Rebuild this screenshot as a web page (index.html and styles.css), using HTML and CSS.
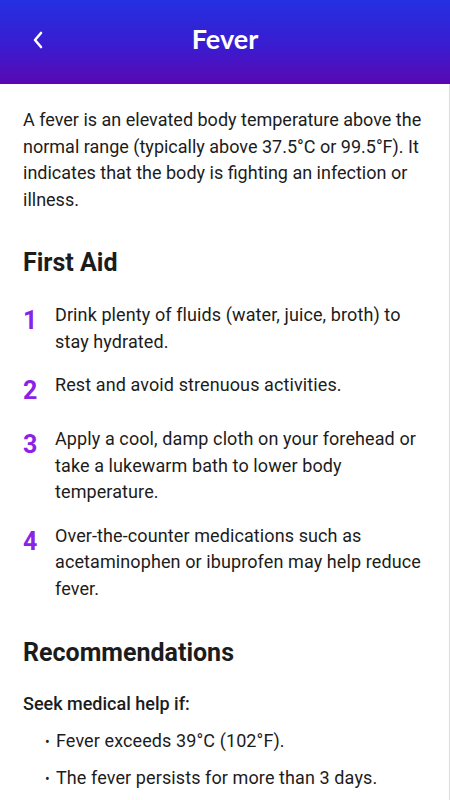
FILE: index.html
```html
<!DOCTYPE html>
<html lang="en">
<head>
  <meta charset="UTF-8">
  <title>Fever</title>
  <link rel="stylesheet" href="styles.css">
</head>
<body>
  <header class="topbar">
    <button class="back" aria-label="Back">
      <svg width="14" height="18" viewBox="0 0 14 18"><path d="M10 2 L4 9 L10 16" fill="none" stroke="#fff" stroke-width="2.6" stroke-linecap="round" stroke-linejoin="round"/></svg>
    </button>
    <h1>Fever</h1>
  </header>

  <main class="content">
    <p class="intro">A fever is an elevated body temperature above the normal range (typically above 37.5°C or 99.5°F). It indicates that the body is fighting an infection or illness.</p>

    <h2>First Aid</h2>
    <ol class="steps">
      <li><span class="num">1</span><span class="txt">Drink plenty of fluids (water, juice, broth) to stay hydrated.</span></li>
      <li><span class="num">2</span><span class="txt">Rest and avoid strenuous activities.</span></li>
      <li><span class="num">3</span><span class="txt">Apply a cool, damp cloth on your forehead or take a lukewarm bath to lower body temperature.</span></li>
      <li><span class="num">4</span><span class="txt">Over-the-counter medications such as acetaminophen or ibuprofen may help reduce fever.</span></li>
    </ol>

    <h2 class="rec">Recommendations</h2>
    <p class="seek">Seek medical help if:</p>
    <ul class="bullets">
      <li>Fever exceeds 39°C (102°F).</li>
      <li>The fever persists for more than 3 days.</li>
    </ul>
  </main>
</body>
</html>
```

FILE: styles.css
```css
body {
  margin: 0;
  font-family: Roboto, "Noto Sans", sans-serif;
  color: #1c1c1c;
  background: #fff;
  overflow: hidden;
}
.topbar {
  height: 84px;
  background: linear-gradient(180deg, #2430e2 0%, #3a1cd0 55%, #5a08b2 100%);
  display: flex;
  align-items: center;
  justify-content: center;
  position: relative;
}
.topbar h1 {
  margin: 0 0 8px;
  font-family: Lato, sans-serif;
  font-weight: 700;
  font-size: 27px;
  color: #fff;
}
.back {
  position: absolute;
  left: 28px;
  top: 30px;
  background: none;
  border: 0;
  padding: 0;
  width: 20px;
  height: 20px;
  display: flex;
  align-items: center;
  justify-content: center;
}
.content {
  padding: 23px 18px 0 23px;
  border-right: 1px solid #dcdcdc;
  min-height: 716px;
}
.intro,
.txt,
.bullets li {
  font-size: 18px;
  line-height: 26.5px;
  letter-spacing: 0.1px;
}
.intro {
  margin: 0;
  letter-spacing: 0;
}
h2 {
  margin: 35px 0 24px;
  font-size: 25px;
  font-weight: 700;
  line-height: 30px;
}
.steps {
  list-style: none;
  margin: 0;
  padding: 0;
}
.steps li {
  display: flex;
  align-items: flex-start;
  gap: 18px;
  min-height: 37px;
  margin-bottom: 17px;
  padding-right: 5px;
}
.steps li:last-child {
  margin-bottom: 0;
}
.num {
  width: 14px;
  flex-shrink: 0;
  color: #8a23e8;
  font-weight: 700;
  font-size: 25px;
  line-height: 26px;
  padding-top: 6px;
}
h2.rec {
  margin: 36px 0 23px;
}
.seek {
  margin: 0 0 11px;
  font-size: 18px;
  font-weight: 500;
  line-height: 26px;
}
.bullets {
  list-style: none;
  margin: 0;
  padding: 0 0 0 22px;
}
.bullets li {
  margin-bottom: 9.5px;
}
.bullets li::before {
  content: "•";
  display: inline-block;
  width: 11px;
  font-size: 14px;
}
```
